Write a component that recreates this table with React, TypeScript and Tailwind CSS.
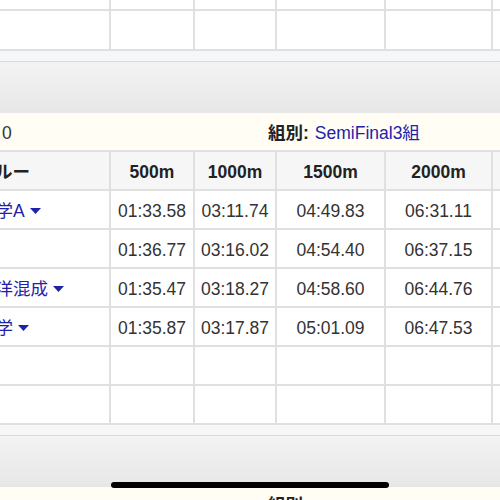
const font = { fontFamily: '"Liberation Sans", "Noto Sans CJK JP", sans-serif' }

const cols = "grid grid-cols-[109px_82px_80px_107px_105px_1fr] gap-[2px]"

type Row = { crew: string; times: string[]; menu: boolean }

const rows: Row[] = [
  { crew: "大学A", times: ["01:33.58", "03:11.74", "04:49.83", "06:31.11"], menu: true },
  { crew: "", times: ["01:36.77", "03:16.02", "04:54.40", "06:37.15"], menu: false },
  { crew: "海洋混成", times: ["01:35.47", "03:18.27", "04:58.60", "06:44.76"], menu: true },
  { crew: "大学", times: ["01:35.87", "03:17.87", "05:01.09", "06:47.53"], menu: true },
]

function Caret() {
  return (
    <svg width="11" height="6" viewBox="0 0 11 6" className="ml-[5px] shrink-0">
      <path d="M0 0 L11 0 L5.5 6 Z" fill="#1e22aa" />
    </svg>
  )
}

function EmptyRow({ h }: { h: string }) {
  return (
    <>
      {[0, 1, 2, 3, 4, 5].map((i) => (
        <div key={i} className={`bg-white ${h}`} />
      ))}
    </>
  )
}

function Divider() {
  return (
    <>
      <div className="h-[10px] bg-[#f5f7f9]" />
      <div className="h-[1px] bg-[#d9d9d9]" />
      <div className="h-[51px] bg-gradient-to-b from-[#f3f3f3] to-[#e7e7e7]" />
    </>
  )
}

export default function App() {
  return (
    <div className="relative w-[500px] h-[500px] overflow-hidden bg-white text-[#333]" style={font}>
      {/* previous group's table, scrolled off the top */}
      <div className={`${cols} bg-[#e0e0e0] pb-[2px]`}>
        <EmptyRow h="h-[9px]" />
        <EmptyRow h="h-[38px]" />
      </div>

      <Divider />

      <div className="flex items-center h-[37px] pt-[3px] bg-[#fffdf4] text-[17.5px]">
        <div className="w-[268px] pl-[2px]">0</div>
        <span className="font-bold text-[#222]">組別:</span>
        <span className="ml-[6px] text-[#1e22aa]">SemiFinal3組</span>
      </div>

      <div className={`${cols} bg-[#e0e0e0] py-[2px] text-[17.5px]`}>
        <div className="h-[37px] pt-[3px] bg-[#f6f6f6] flex items-center overflow-hidden font-bold text-[#222]">
          <span className="-ml-[22px] whitespace-nowrap">クルー</span>
        </div>
        {["500m", "1000m", "1500m", "2000m"].map((d) => (
          <div key={d} className="h-[37px] pt-[3px] bg-[#f6f6f6] flex items-center justify-center font-bold text-[#222]">
            {d}
          </div>
        ))}
        <div className="h-[37px] bg-[#f6f6f6]" />

        {rows.map((r, i) => (
          <div key={i} className="contents">
            <div className="h-[37px] pt-[3px] bg-white flex items-center overflow-hidden text-[#1e22aa]">
              {r.crew && (
                <div className="-ml-[22px] flex items-center whitespace-nowrap">
                  <span>{r.crew}</span>
                  {r.menu && <Caret />}
                </div>
              )}
            </div>
            {r.times.map((t, j) => (
              <div key={j} className="h-[37px] pt-[3px] bg-white flex items-center justify-center">
                {t}
              </div>
            ))}
            <div className="h-[37px] bg-white" />
          </div>
        ))}
        <EmptyRow h="h-[37px]" />
        <EmptyRow h="h-[37px]" />
      </div>

      <Divider />

      <div className="flex items-start h-[37px] bg-[#fffdf4] text-[17.5px] pt-[5px]">
        <div className="w-[268px]" />
        <span className="font-bold text-[#222]">組別:</span>
      </div>

      {/* home indicator */}
      <div className="absolute left-[111px] top-[482px] w-[278px] h-[6px] rounded-full bg-black" />
    </div>
  )
}
